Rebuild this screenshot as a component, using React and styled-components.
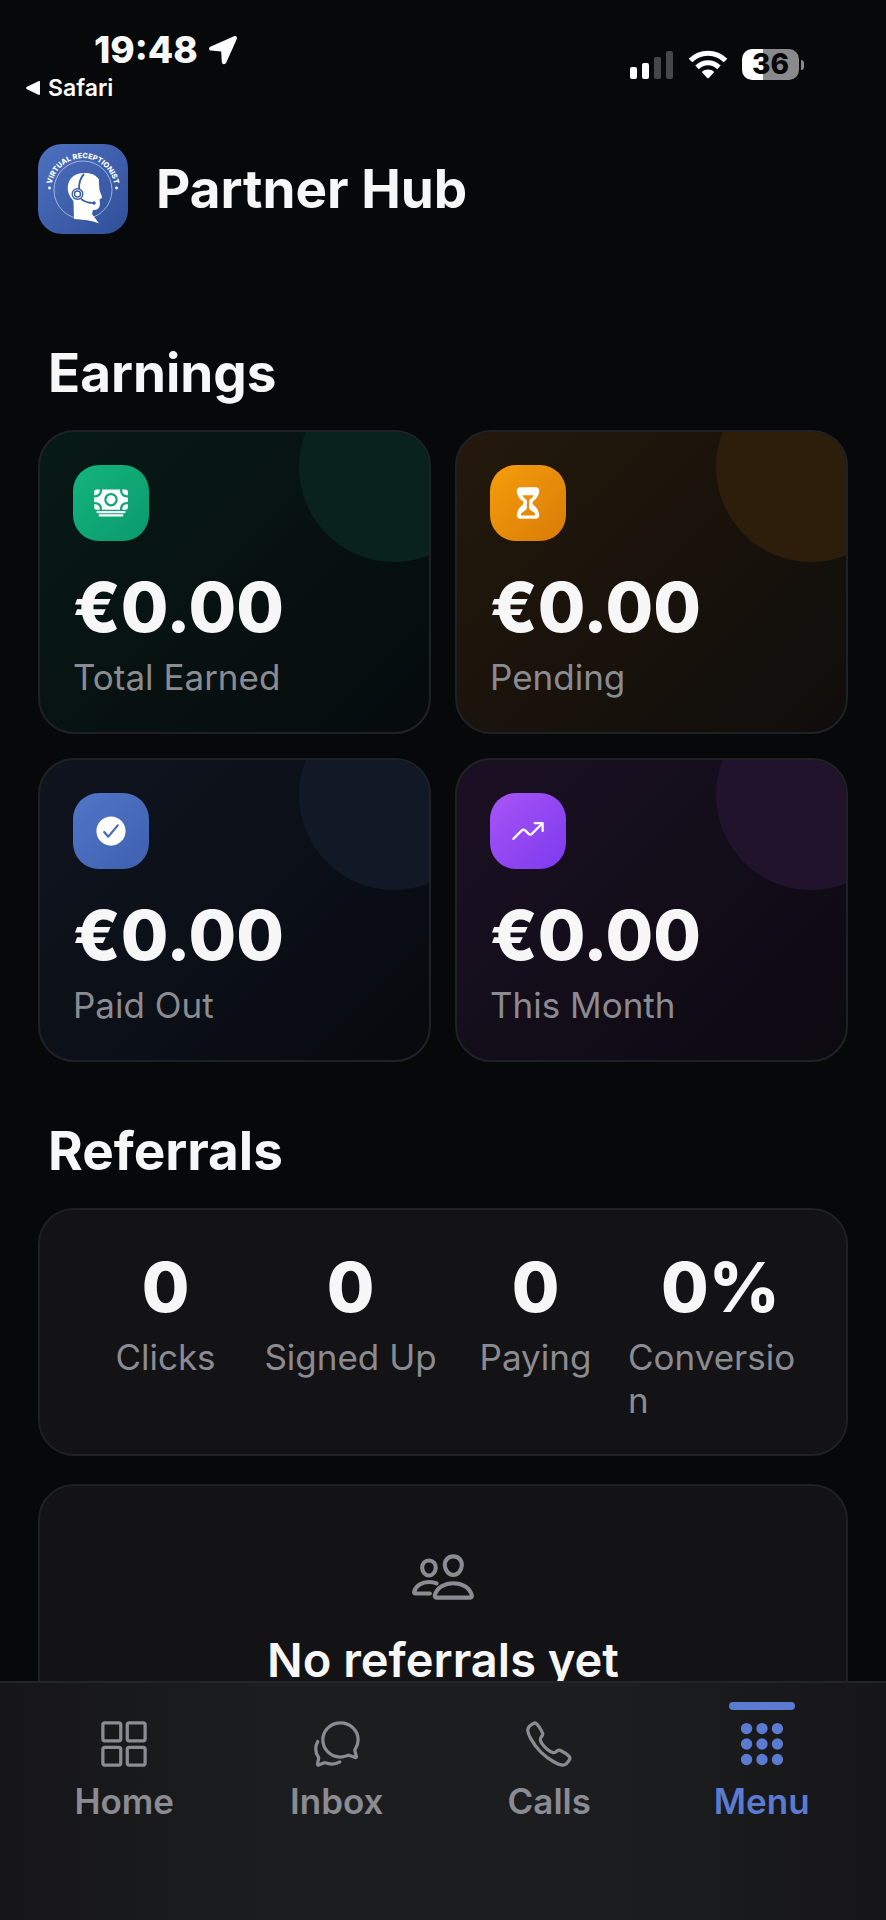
import styled, { createGlobalStyle } from "styled-components";
import {
  IoApps,
  IoCallOutline,
  IoCash,
  IoChatbubblesOutline,
  IoCheckmarkCircle,
  IoGridOutline,
  IoHourglass,
  IoPeopleOutline,
  IoTrendingUp,
} from "react-icons/io5";

const earnings = [
  { label: "Total Earned", value: "€0.00", icon: IoCash, tone: "green" },
  { label: "Pending", value: "€0.00", icon: IoHourglass, tone: "amber" },
  { label: "Paid Out", value: "€0.00", icon: IoCheckmarkCircle, tone: "blue" },
  { label: "This Month", value: "€0.00", icon: IoTrendingUp, tone: "purple" },
];

const referrals = [
  { label: "Clicks", value: "0" },
  { label: "Signed Up", value: "0" },
  { label: "Paying", value: "0" },
  { label: "Conversion", value: "0%" },
];

const tabs = [
  { label: "Home", icon: IoGridOutline },
  { label: "Inbox", icon: IoChatbubblesOutline },
  { label: "Calls", icon: IoCallOutline },
  { label: "Menu", icon: IoApps, active: true },
];

// card = background of the card, badge = background of the icon, orb = corner circle
const tones = {
  green: {
    card: "linear-gradient(135deg, #071a15 0%, #07110f 60%, #060b0c 100%)",
    badge: "linear-gradient(135deg, #14b47d, #0a9a6c)",
    orb: "#09231c",
  },
  amber: {
    card: "linear-gradient(135deg, #24190b 0%, #18120b 55%, #0f0d0c 100%)",
    badge: "linear-gradient(135deg, #f59e0b, #d97b08)",
    orb: "#2c1e0b",
  },
  blue: {
    card: "linear-gradient(135deg, #10141f 0%, #0b0f17 55%, #07090d 100%)",
    badge: "linear-gradient(135deg, #5175c8, #3f60af)",
    orb: "#121926",
  },
  purple: {
    card: "linear-gradient(135deg, #1b1023 0%, #120d19 55%, #0c0a11 100%)",
    badge: "linear-gradient(135deg, #a855f7, #7c3aed)",
    orb: "#22132d",
  },
};

const Logo = () => (
  <LogoSvg viewBox='0 0 90 90' role='img' aria-label='Virtual Receptionist'>
    <defs>
      <linearGradient id='logoBg' x1='0' y1='0' x2='1' y2='1'>
        <stop offset='0' stopColor='#4e70c0' />
        <stop offset='1' stopColor='#2f4f98' />
      </linearGradient>
      <path id='logoArc' d='M13.200 46 A31.800 31.800 0 0 1 76.800 46' />
    </defs>
    <rect width='90' height='90' rx='24' fill='url(#logoBg)' />
    <circle cx='45' cy='46' r='29' fill='none' stroke='#b9c8ee' strokeWidth='0.8' />
    <text fill='#fff' fontSize='7.3' fontWeight='800' textAnchor='middle'>
      <textPath href='#logoArc' startOffset='50%'>
        VIRTUAL RECEPTIONIST
      </textPath>
    </text>
    <circle cx='11.500' cy='44' r='1.4' fill='#fff' />
    <circle cx='78.500' cy='44' r='1.4' fill='#fff' />
    <path
      fill='#fff'
      d='M36 75 L35.5 57 C31 52 29 47 30 41 C31.500 33 38 29 46 29 C52 28.500 58 30.500 61 35.500 C60.500 39 61.500 42 61.500 46 L64 53 C64 55 61.500 55 61.500 55 L62 60 C61.500 64 60 66 55 66 L54 70 L61 79.500 C54 76.500 45 75.500 36 75 Z'
    />
    <path d='M46 30 C42 34 41 39 41 45' fill='none' stroke='#3c5da8' strokeWidth='1.8' />
    <circle cx='39.500' cy='50' r='6' fill='#3c5da8' />
    <circle cx='39.500' cy='50' r='4.600' fill='#fff' />
    <circle cx='39.500' cy='50' r='3' fill='none' stroke='#3c5da8' strokeWidth='1.4' />
    <path d='M43 55 C47 58 51 59 55 59' fill='none' stroke='#3c5da8' strokeWidth='1.6' />
    <circle cx='56' cy='59' r='1.8' fill='#3c5da8' />
  </LogoSvg>
);

const StatusBar = () => (
  <Status>
    <StatusLeft>
      <Clock>
        19:48
        <svg width='30' height='30' viewBox='0 0 30 30' fill='#fff' aria-hidden='true'>
          <path d='M26 1.200 L2.300 11.800 C0.300 13 0.800 15.400 3 15.600 L13.200 16.400 L13.800 27 C14 29.600 17 29.900 18.200 27.800 L28.800 4 C29.600 2 28 0.400 26 1.200 Z' />
        </svg>
      </Clock>
      <BackLink href='#'>
        <svg width='14' height='14' viewBox='0 0 14 14' fill='#fff' aria-hidden='true'>
          <path d='M12.400 0.300 L1 5.800 C-0.200 6.500 -0.200 7.500 1 8.200 L12.400 13.700 C13.400 14.200 14 13.700 14 12.800 V1.200 C14 0.300 13.400 -0.200 12.400 0.300 Z' />
        </svg>
        Safari
      </BackLink>
    </StatusLeft>
    <StatusRight>
      <svg width='44' height='28' viewBox='0 0 44 28' fill='#fff' aria-hidden='true'>
        <rect x='0' y='16' width='7' height='12' rx='2' />
        <rect x='12' y='12' width='7' height='16' rx='2' />
        <rect x='24' y='6' width='7' height='22' rx='2' opacity='0.25' />
        <rect x='36' y='0' width='7' height='28' rx='2' opacity='0.25' />
      </svg>
      <svg width='40' height='30' viewBox='0 0 40 30' aria-hidden='true'>
        <g fill='none' stroke='#fff' strokeWidth='5'>
          <path d='M2.500 10.500 C12 0.800 28 0.800 37.500 10.500' />
          <path d='M9 17.300 C15.500 11.300 24.500 11.300 31 17.300' />
        </g>
        <path d='M13.800 22 C17.500 18.800 22.500 18.800 26.200 22 L21 27.800 C20.300 28.500 19.700 28.500 19 27.800 Z' fill='#fff' />
      </svg>
      <Battery>
        <Charge>36</Charge>
        <Tip />
      </Battery>
    </StatusRight>
  </Status>
);

const EarningCard = ({ label, value, icon: Icon, tone }) => (
  <Card $tone={tone}>
    <Orb $tone={tone} />
    <Badge $tone={tone}>
      <Icon size={36} />
    </Badge>
    <Value>{value}</Value>
    <Label>{label}</Label>
  </Card>
);

const App = () => {
  return (
    <>
      <GlobalStyle />
      <Container>
        <Main>
          <StatusBar />
          <Header>
            <Logo />
            <Title>Partner Hub</Title>
          </Header>

          <Section>
            <SectionTitle>Earnings</SectionTitle>
            <CardGrid>
              {earnings.map((item) => (
                <EarningCard key={item.label} {...item} />
              ))}
            </CardGrid>
          </Section>

          <Section>
            <SectionTitle>Referrals</SectionTitle>
            <StatsPanel>
              {referrals.map((item) => (
                <Stat key={item.label}>
                  <Value>{item.value}</Value>
                  <Label>{item.label}</Label>
                </Stat>
              ))}
            </StatsPanel>
            <EmptyPanel>
              <IoPeopleOutline size={66} />
              <EmptyTitle>No referrals yet</EmptyTitle>
            </EmptyPanel>
          </Section>
        </Main>

        <TabBar>
          {tabs.map(({ label, icon: Icon, active }) => (
            <Tab key={label} href='#' $active={active}>
              <Icon size={52} />
              {label}
            </Tab>
          ))}
        </TabBar>
      </Container>
    </>
  );
};

const GlobalStyle = createGlobalStyle`
  * {
    box-sizing: border-box;
  }

  body {
    margin: 0;
    background: #07080a;
    color: #f7f7f8;
    font-family: Inter, "Liberation Sans", sans-serif;
  }

  h1, h2, h3, p {
    margin: 0;
  }

  svg {
    display: block;
    flex-shrink: 0;
  }
`;

const Container = styled.div`
  display: flex;
  flex-direction: column;
  height: 100vh;
`;

const Main = styled.main`
  flex: 1;
  min-height: 0;
  overflow: hidden auto;
  scrollbar-width: none;
`;

const Status = styled.div`
  display: flex;
  justify-content: space-between;
  align-items: flex-start;
  height: 144px;
  padding: 28px 82px 0 26px;
`;

const StatusLeft = styled.div`
  display: flex;
  flex-direction: column;
`;

const Clock = styled.div`
  display: flex;
  align-items: center;
  gap: 10px;
  padding-left: 68px;
  font-size: 37px;
  font-weight: 800;
  line-height: 44px;
`;

const BackLink = styled.a`
  display: flex;
  align-items: center;
  gap: 8px;
  color: #fff;
  font-size: 23px;
  font-weight: 600;
  line-height: 32px;
  text-decoration: none;
`;

const StatusRight = styled.div`
  display: flex;
  align-items: center;
  gap: 14px;
  padding-top: 21px;
`;

const Battery = styled.div`
  display: flex;
  align-items: center;
  gap: 2px;
`;

const Charge = styled.div`
  width: 57px;
  border-radius: 10px;
  background: linear-gradient(90deg, #fff 36%, #8a8a8c 36%);
  color: #060709;
  font-size: 28px;
  font-weight: 800;
  line-height: 31px;
  text-align: center;
`;

const Tip = styled.div`
  width: 3px;
  height: 10px;
  border-radius: 0 4px 4px 0;
  background: #8a8a8c;
`;

const Header = styled.header`
  display: flex;
  align-items: center;
  gap: 28px;
  padding: 0 38px 50px;
`;

const LogoSvg = styled.svg`
  width: 90px;
  height: 90px;
`;

const Title = styled.h1`
  font-size: 53px;
  font-weight: 700;
  line-height: 66px;
`;

const Section = styled.section`
  padding: 56px 38px 0;
`;

const SectionTitle = styled.h2`
  margin-bottom: 24px;
  padding-left: 10px;
  font-size: 53px;
  font-weight: 700;
  line-height: 66px;
`;

const CardGrid = styled.div`
  display: grid;
  grid-template-columns: repeat(2, 1fr);
  gap: 24px;
`;

const Panel = styled.div`
  border: 2px solid #1f2022;
  border-radius: 36px;
  background: #131315;
`;

const Card = styled(Panel)`
  position: relative;
  overflow: hidden;
  padding: 33px;
  border-color: #1f2224;
  background: ${({ $tone }) => tones[$tone].card};
`;

const Orb = styled.div`
  position: absolute;
  top: -60px;
  right: -60px;
  width: 190px;
  height: 190px;
  border-radius: 50%;
  background: ${({ $tone }) => tones[$tone].orb};
`;

const Badge = styled.div`
  display: flex;
  align-items: center;
  justify-content: center;
  width: 76px;
  height: 76px;
  margin-bottom: 25px;
  border-radius: 26px;
  background: ${({ $tone }) => tones[$tone].badge};
  color: #fff;
`;

const Value = styled.p`
  margin-bottom: 8px;
  font-size: 69px;
  font-weight: 800;
  line-height: 82px;
`;

const Label = styled.p`
  max-width: 100%;
  color: #8b8b92;
  font-size: 35px;
  line-height: 43px;
  overflow-wrap: break-word;
`;

const StatsPanel = styled(Panel)`
  display: grid;
  grid-template-columns: repeat(4, 1fr);
  padding: 36px 33px 32px;
`;

const Stat = styled.div`
  display: flex;
  flex-direction: column;
  align-items: center;
  min-width: 0;
`;

const EmptyPanel = styled(Panel)`
  display: flex;
  flex-direction: column;
  align-items: center;
  gap: 22px;
  margin-top: 28px;
  padding: 58px 33px;
  color: #8b8b92;
`;

const EmptyTitle = styled.h3`
  color: #f7f7f8;
  font-size: 47px;
  font-weight: 600;
  line-height: 56px;
`;

const TabBar = styled.nav`
  display: grid;
  grid-template-columns: repeat(4, 1fr);
  height: 239px;
  padding: 0 18px;
  border-top: 2px solid #242527;
  background: linear-gradient(90deg, #161618, #1c1d1f 30%, #1c1d1f 70%, #161618);
`;

const Tab = styled.a`
  position: relative;
  display: flex;
  flex-direction: column;
  align-items: center;
  gap: 10px;
  padding-top: 35px;
  color: ${({ $active }) => ($active ? "#5b7bd0" : "#8b8b92")};
  font-size: 35px;
  font-weight: 600;
  line-height: 43px;
  text-decoration: none;

  &::before {
    content: "";
    display: ${({ $active }) => ($active ? "block" : "none")};
    position: absolute;
    top: 19px;
    width: 66px;
    height: 8px;
    border-radius: 4px;
    background: #5b7bd0;
  }
`;

export default App;
